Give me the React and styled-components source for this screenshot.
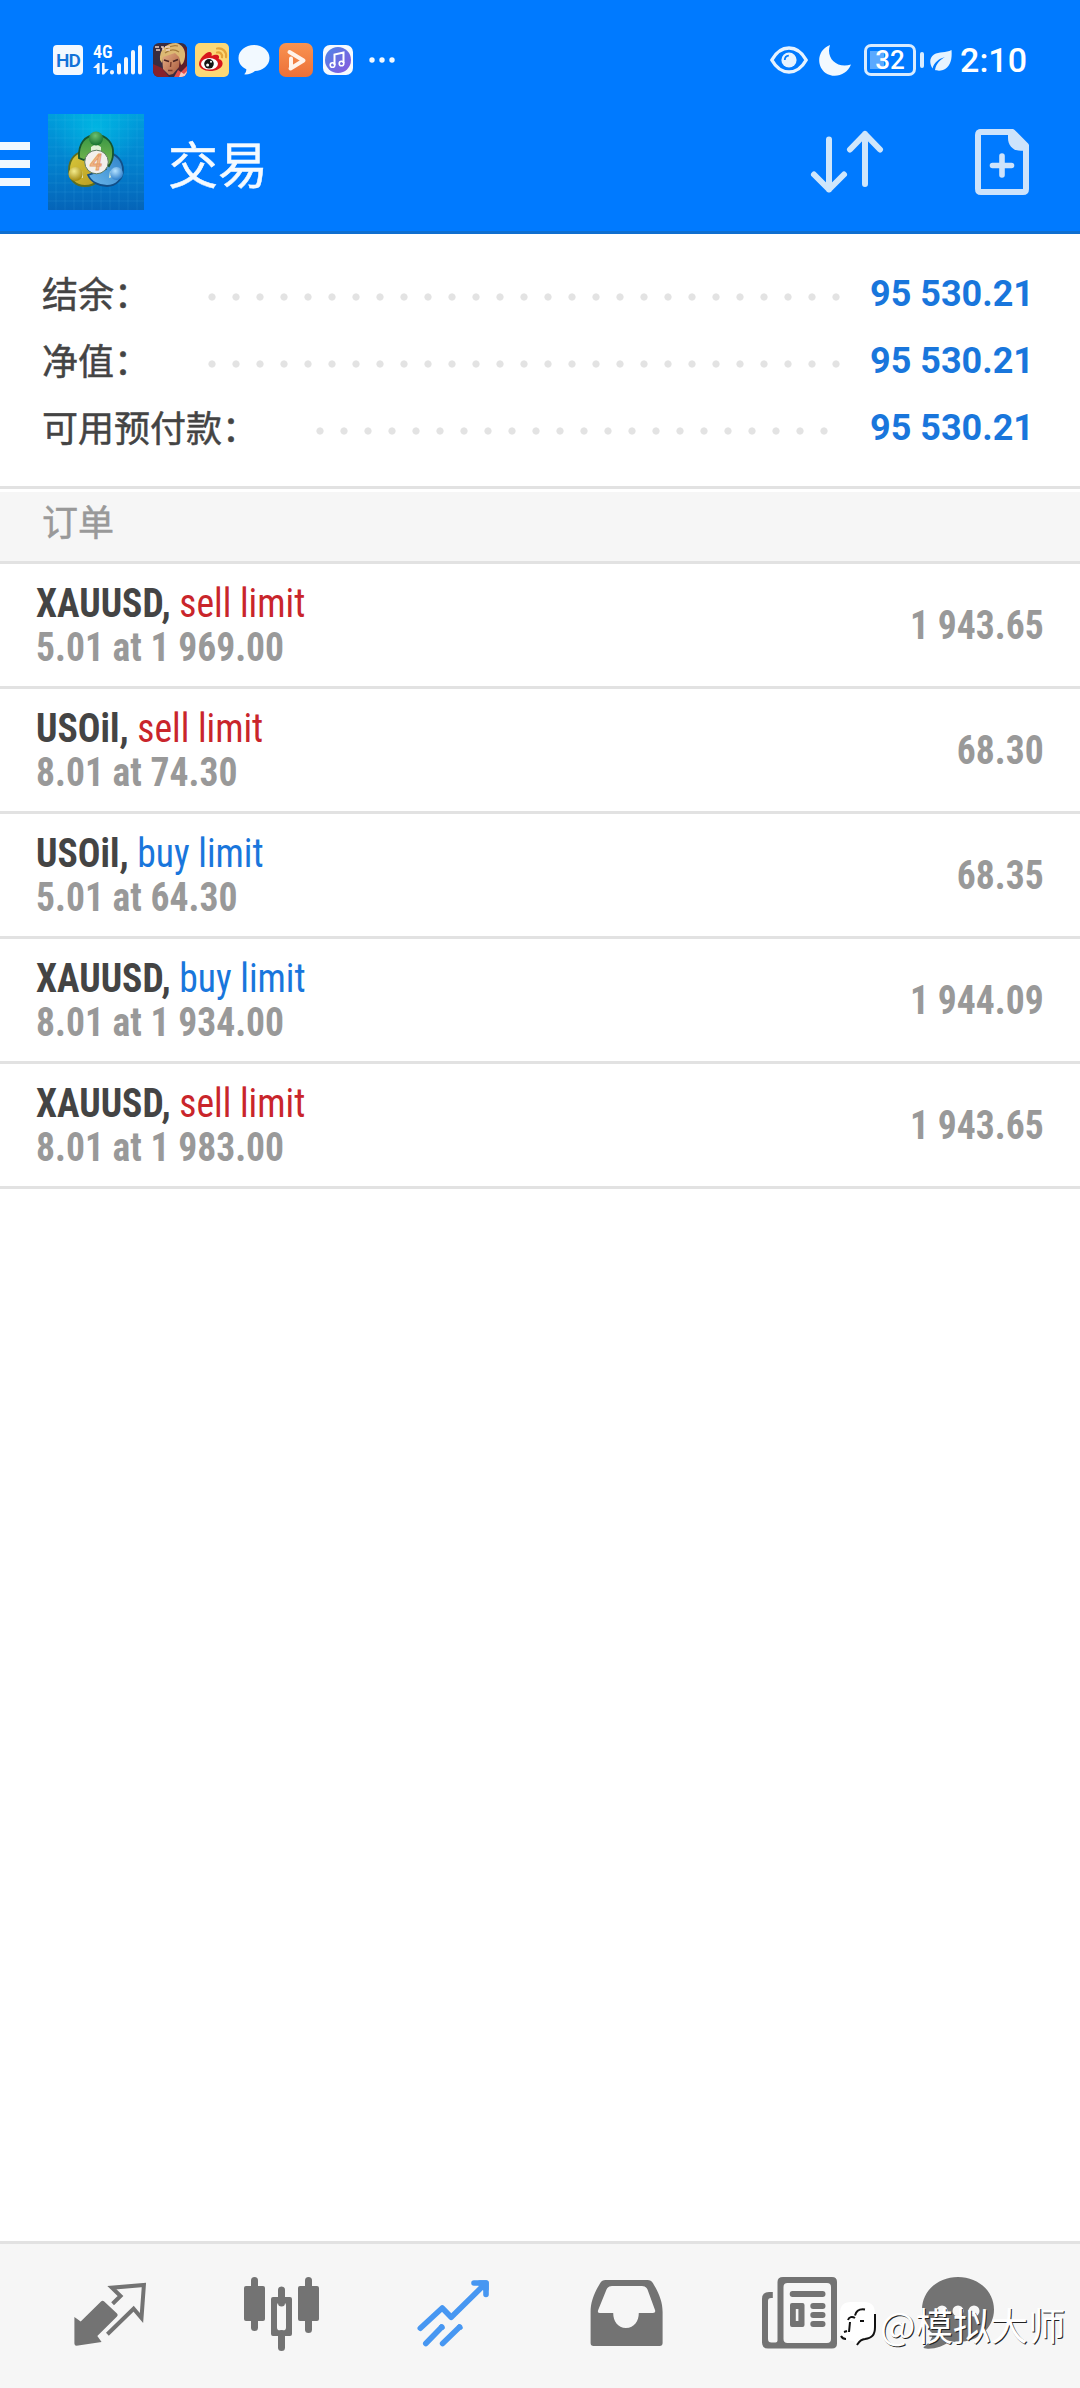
import React from "react"
import styled, { createGlobalStyle } from "styled-components"

const GlobalStyle = createGlobalStyle`
	:root {
		--blue: #007aff;
		--value: #1976dc;
		--sell: #c9252b;
		--dark: #444;
		--grey: #999;
		--line: #e2e2e2;
		--panel: #f6f6f6;
		--nav: #737373;
	}
	* {
		box-sizing: border-box;
	}
	body {
		margin: 0;
		background: #fff;
		font-family: Roboto, "Noto Sans CJK SC", sans-serif;
	}
	svg {
		display: block;
		flex: none;
	}
`
const Screen = styled.div`
	width: 1080px;
	height: 2388px;
	display: flex;
	flex-direction: column;
	overflow: hidden;
	background: #fff;
`
const Header = styled.header`
	height: 234px;
	background: var(--blue);
	border-bottom: 3px solid #0f6fd0;
`
const StatusBar = styled.div`
	height: 98px;
	padding: 22px 53px 0 53px;
	display: flex;
	align-items: center;
	justify-content: space-between;
`
const StatusGroup = styled.div`
	display: flex;
	align-items: center;
`
const HdBadge = styled.div`
	width: 30px;
	height: 30px;
	margin-right: 10px;
	border-radius: 4px;
	background: #f2f8ff;
	color: #1372d8;
	font-size: 19px;
	font-weight: 600;
	line-height: 31px;
	text-align: center;
	letter-spacing: -1px;
`
const Signal = styled.div`
	position: relative;
	width: 51px;
	height: 32px;
`
const SignalLabel = styled.span`
	position: absolute;
	left: 0;
	top: -1px;
	color: #fff;
	font-family: "Roboto Condensed", Roboto, sans-serif;
	font-size: 18px;
	font-weight: 600;
	line-height: 18px;
`
const StatusIcon = styled.div`
	margin-left: ${p => p.$gap}px;
`
const Battery = styled.div`
	position: relative;
	width: 52px;
	height: 32px;
	margin-left: 13px;
	border: 3px solid #d9ecff;
	border-radius: 7px;
	background: linear-gradient(90deg, #5aa9ff 14px, transparent 14px) 3px 4px / 40px 18px no-repeat;
	color: #fff;
	font-size: 26px;
	font-weight: 500;
	line-height: 26px;
	text-align: center;
`
const BatteryTip = styled.div`
	width: 4px;
	height: 16px;
	margin-left: 4px;
	border-radius: 2px;
	background: #d9ecff;
`
const Clock = styled.div`
	margin-left: 8px;
	color: #fff;
	font-size: 34px;
	font-weight: 500;
	line-height: 40px;
`
const Toolbar = styled.div`
	height: 128px;
	padding-right: 50px;
	display: flex;
	align-items: center;
`
const MenuButton = styled.div`
	width: 30px;
	margin: 4px 18px 0 0;
	display: flex;
	flex-direction: column;
	gap: 10px;

	span {
		height: 8px;
		background: #f0f8ff;
	}
`
const Title = styled.h1`
	flex: 1;
	margin: 0 0 0 24px;
	color: #f4faff;
	font-family: "Noto Sans CJK SC", sans-serif;
	font-size: 50px;
	font-weight: 400;
	line-height: 60px;
	-webkit-text-stroke: 0.5px;
`
const ToolbarActions = styled.div`
	display: flex;
	align-items: center;
	gap: 90px;
`
const Summary = styled.section`
	height: 255px;
	padding: 26px 46px 0 42px;
	border-bottom: 3px solid var(--line);
`
const SummaryRow = styled.div`
	height: 67px;
	display: flex;
	align-items: center;
`
const SummaryLabel = styled.div`
	width: ${p => (p.$wide ? 266 : 158)}px;
	padding-bottom: 4px;
	color: var(--dark);
	font-family: "Noto Sans CJK SC", sans-serif;
	font-size: 36px;
	line-height: 44px;
	white-space: nowrap;
	-webkit-text-stroke: 0.5px;
`
const Leader = styled.div`
	width: ${p => p.$dots * 24}px;
	height: 8px;
	margin-top: 7px;
	background: radial-gradient(circle, #e3e3e3 3.2px, transparent 4px) 0 0 / 24px 8px repeat-x;
`
const SummaryValue = styled.div`
	margin-left: auto;
	color: var(--value);
	font-size: 36px;
	font-weight: 700;
`
const SectionTitle = styled.h2`
	height: 75px;
	margin: 0;
	padding: 4px 42px 0;
	border-top: 3px solid #fff;
	border-bottom: 3px solid var(--line);
	background: var(--panel);
	color: var(--grey);
	font-family: "Noto Sans CJK SC", sans-serif;
	font-size: 36px;
	font-weight: 400;
	line-height: 48px;
	-webkit-text-stroke: 0.5px;
`
const OrderList = styled.main`
	flex: 1;
	font-family: "Roboto Condensed", Roboto, sans-serif;
	font-size: 41px;
	line-height: 44px;
`
const OrderRow = styled.div`
	height: 125px;
	padding: 0 36px;
	display: flex;
	align-items: center;
	justify-content: space-between;
	border-bottom: 3px solid var(--line);
`
const OrderInfo = styled.div`
	transform: scaleX(0.917);
	transform-origin: left;
	white-space: nowrap;
`
const OrderHeading = styled.div`
	color: var(--dark);
	font-weight: 700;
`
const OrderSide = styled.span`
	color: ${p => (p.$side === "sell" ? "var(--sell)" : "var(--value)")};
	font-weight: 400;
`
const OrderVolume = styled.div`
	color: var(--grey);
	font-weight: 700;
`
const OrderPrice = styled.div`
	color: var(--grey);
	font-weight: 700;
	transform: scaleX(0.917);
	transform-origin: right;
`
const NavBar = styled.nav`
	position: relative;
	height: 147px;
	padding: 0 24px;
	display: flex;
	border-top: 3px solid var(--line);
	background: var(--panel);
`
const NavItem = styled.div`
	width: 172px;
	display: flex;
	align-items: center;
	justify-content: center;
	color: ${p => (p.$active ? "#4797f2" : "var(--nav)")};

	svg {
		overflow: visible;
	}
`
const Watermark = styled.div`
	position: absolute;
	left: 838px;
	top: 55px;
	display: flex;
	align-items: center;
	color: #fff;
	font-family: "Noto Sans CJK SC", sans-serif;
	font-size: 37.5px;
	line-height: 50px;
	white-space: nowrap;
	text-shadow: 1px 1px 0 #222;
`

const SignalBars = () => (
  <svg width="51" height="32" viewBox="0 0 51 32">
    <g stroke="#f2f8ff" strokeWidth="4" strokeLinecap="round">
      <path d="M19 28v0.5M26 21v7.5M33 15v13.5M40 8v20.5M47 3v25.5" />
    </g>
    <path d="M0 24l5-5h1.6v11H3.8v-6zM9 19h2.6v6H16l-5 5.5H9z" fill="#f2f8ff" />
  </svg>
)

const GameIcon = () => (
  <svg width="34" height="34" viewBox="0 0 34 34">
    <defs>
      <clipPath id="game"><rect width="34" height="34" rx="6" /></clipPath>
      <linearGradient id="face" x1="0" y1="0" x2="1" y2="1">
        <stop offset="0" stopColor="#e9b58a" />
        <stop offset="1" stopColor="#a8583c" />
      </linearGradient>
    </defs>
    <g clipPath="url(#game)">
      <rect width="34" height="34" fill="#3a2c40" />
      <path d="M24 4h10v22l-9 2z" fill="#5c1f2a" />
      <path d="M0 21l9 4 7 9H0z" fill="#86222a" />
      <path d="M9 13l10-6 8 6-1 11-6 7-4 1-6-6z" fill="url(#face)" />
      <path d="M7 17C6 7 13 0 23 0c6 1 10 7 9 14-.5 4-2 7-4 8l-2-8-4-4-6 2-6 2-1 6z" fill="#dcb873" />
      <path d="M13 6c4-3 8-4 12-3M12 10c5-4 10-4 14-1" stroke="#a47a3c" strokeWidth="1.2" fill="none" />
      <path d="M11 17l5 1.500M20 18.500l5-2" stroke="#4a2320" strokeWidth="1.800" />
      <path d="M18 19l-.5 5M15 27.500h4.500" stroke="#7a3a2a" strokeWidth="1.400" />
      <path d="M2 4h4M3 7h4M8 4h2v3M12 4h5M13 7h4" stroke="#f0d2c4" strokeWidth="1.600" />
      <path d="M21 34l4-7 3 2 6-6v11z" fill="#e0504f" />
      <path d="M26 34l2-5 3 2 3-3v6z" fill="#f7c9c0" />
    </g>
  </svg>
)

const WeiboIcon = () => (
  <svg width="34" height="34" viewBox="0 0 34 34">
    <rect width="34" height="34" rx="5" fill="#fcd877" />
    <path d="M4 21c0-5 6-11 10-12 3 0 3 2 2.600 4 3-1.500 7-2 7.400.6.2 1.400-.4 2.400-.4 2.400 2.400.6 4 2 4 4.400C27.600 25 21 28 15 28S4 25 4 21z" fill="#d8161d" />
    <ellipse cx="14.500" cy="20.800" rx="8.500" ry="5.800" fill="#fff" />
    <circle cx="14" cy="20.800" r="4.800" fill="#151515" />
    <circle cx="12.600" cy="22" r="1.500" fill="#fff" />
    <circle cx="16" cy="18.800" r="1" fill="#fff" />
    <path d="M22 9.500c3-.8 5.600 1.500 5 4.700M22 5.500c5.500-1 10 3 9 8.700" fill="none" stroke="#e5a43a" strokeWidth="2.200" strokeLinecap="round" />
  </svg>
)

const ChatIcon = () => (
  <svg width="32" height="32" viewBox="0 0 32 32">
    <path d="M16 1c8.500 0 15.500 5.600 15.500 13S24.500 27 17 27c-3 2.600-7 3.700-11 3.300 1.600-1.300 2.400-3 2.300-5C3.500 23 .5 19 .5 14 .5 6.600 7.500 1 16 1z" fill="#f2f9ff" />
  </svg>
)

const VideoIcon = () => (
  <svg width="34" height="34" viewBox="0 0 34 34">
    <defs>
      <linearGradient id="video" x1="0" y1="0" x2="0" y2="1">
        <stop offset="0" stopColor="#f99350" />
        <stop offset="1" stopColor="#ec7038" />
      </linearGradient>
    </defs>
    <rect width="34" height="34" rx="7" fill="url(#video)" />
    <path d="M12 24V15.500M10.500 9L24.500 17.500 11.500 25.500" fill="none" stroke="#fff3ea" strokeWidth="4" strokeLinecap="round" strokeLinejoin="round" />
  </svg>
)

const MusicIcon = () => (
  <svg width="30" height="30" viewBox="0 0 30 30">
    <defs>
      <linearGradient id="music" x1="0" y1="0" x2="1" y2="1">
        <stop offset="0" stopColor="#4d86e8" />
        <stop offset="1" stopColor="#8a58dc" />
      </linearGradient>
    </defs>
    <rect width="30" height="30" rx="7" fill="#f6faff" />
    <circle cx="15" cy="15" r="13" fill="url(#music)" />
    <path d="M11.500 20V9.500l9-2V18" fill="none" stroke="#fff" strokeWidth="2" />
    <circle cx="9.500" cy="20" r="2.300" fill="none" stroke="#fff" strokeWidth="1.600" />
    <circle cx="18.500" cy="18.500" r="2.300" fill="none" stroke="#fff" strokeWidth="1.600" />
  </svg>
)

const MoreDots = () => (
  <svg width="26" height="6" viewBox="0 0 26 6" fill="#f2f9ff">
    <circle cx="3" cy="3" r="2.700" />
    <circle cx="13" cy="3" r="2.700" />
    <circle cx="23" cy="3" r="2.700" />
  </svg>
)

const EyeIcon = () => (
  <svg width="38" height="28" viewBox="0 0 38 28">
    <path d="M1.800 14C6 6.500 12 2 19 2s13 4.500 17.200 12C32 21.500 26 26 19 26S6 21.500 1.800 14z" fill="none" stroke="#e6f3ff" strokeWidth="3.400" strokeLinejoin="round" />
    <circle cx="19" cy="14" r="7.600" fill="#e6f3ff" />
    <path d="M14.800 14c0-2.500 1.500-4.200 4-4.400" fill="none" stroke="#007aff" strokeWidth="1.800" />
  </svg>
)

const MoonIcon = () => (
  <svg width="32" height="31" viewBox="0 0 32 31">
    <path d="M11 0C-2 5-3 21 6.500 28c9 6 21.500 2 25.500-8.500C18 24 6.500 13 11 0z" fill="#f2f9ff" />
  </svg>
)

const LeafIcon = () => (
  <svg width="22" height="23" viewBox="0 0 22 23">
    <path d="M21.500 1c.8 9-1 17.500-8.500 20-3.500 1.200-6.500.5-8 0C6 14.500 10.500 10.500 15 8 9.500 9.500 4 13 2.500 19.500-.5 15-1 9 4 5.500 9 2.500 16 4 21.500 1z" fill="#e6f3ff" />
  </svg>
)

const AppLogo = () => (
  <svg width="96" height="96" viewBox="0 0 96 96">
    <defs>
      <linearGradient id="tile" x1="0" y1="0" x2="0" y2="1">
        <stop offset="0" stopColor="#009fdc" />
        <stop offset="0.500" stopColor="#0282cf" />
        <stop offset="1" stopColor="#0564b8" />
      </linearGradient>
      <radialGradient id="glow" cx="0.500" cy="0.150" r="0.450">
        <stop offset="0" stopColor="#00c8e8" stopOpacity="0.600" />
        <stop offset="1" stopColor="#00c8e8" stopOpacity="0" />
      </radialGradient>
      <linearGradient id="green" x1="0" y1="0" x2="0" y2="1">
        <stop offset="0" stopColor="#379544" />
        <stop offset="1" stopColor="#7cba50" />
      </linearGradient>
      <linearGradient id="yellow" x1="0" y1="0" x2="1" y2="1">
        <stop offset="0" stopColor="#d9c93c" />
        <stop offset="1" stopColor="#b89a20" />
      </linearGradient>
      <linearGradient id="sky" x1="0" y1="1" x2="1" y2="0">
        <stop offset="0" stopColor="#6cb8ec" />
        <stop offset="1" stopColor="#2c80c8" />
      </linearGradient>
      <radialGradient id="greenBall" cx="0.450" cy="0.300" r="0.700">
        <stop offset="0" stopColor="#6cc070" />
        <stop offset="1" stopColor="#14702e" />
      </radialGradient>
      <radialGradient id="yellowBall" cx="0.400" cy="0.300" r="0.700">
        <stop offset="0" stopColor="#f4ec8c" />
        <stop offset="1" stopColor="#a48a10" />
      </radialGradient>
      <radialGradient id="blueBall" cx="0.400" cy="0.300" r="0.700">
        <stop offset="0" stopColor="#b4e2ff" />
        <stop offset="1" stopColor="#2f80cc" />
      </radialGradient>
    </defs>
    <rect width="96" height="96" fill="url(#tile)" />
    <rect width="96" height="96" fill="url(#glow)" />
    <path d="M8 0v96M17 0v96M26 0v96M35 0v96M44 0v96M53 0v96M62 0v96M71 0v96M80 0v96M89 0v96M0 6h96M0 15h96M0 24h96M0 33h96M0 42h96M0 51h96M0 60h96M0 69h96M0 78h96M0 87h96" stroke="#7fd8ff" strokeOpacity="0.100" />
    <path d="M38 38c-9-1-17 6-17 18 0 10 7 16 16 16 6 0 10-2 13-5z" fill="url(#yellow)" stroke="#5c6e20" strokeWidth="1.800" />
    <path d="M59 38c10 2 16 9 16 18 0 9-7 16-16 16-8 0-16-4-19-11l18-6z" fill="url(#sky)" stroke="#124f88" strokeWidth="1.800" />
    <path d="M31 44c-1-14 6-23 17-23s18 9 17 19c0 5-2 9-4 12L48 40 36 46z" fill="url(#green)" stroke="#15552f" strokeWidth="1.800" />
    <path d="M43 33l5-3 5 3v6H43zM34 57l1 7-6-2zM62 57l-1 7 6-2z" fill="#dff0d6" />
    <circle cx="48" cy="24.500" r="7" fill="url(#greenBall)" />
    <circle cx="27.500" cy="60" r="7" fill="url(#yellowBall)" />
    <circle cx="68.500" cy="59.500" r="6.500" fill="url(#blueBall)" />
    <circle cx="48.500" cy="48" r="11.800" fill="#f2efec" stroke="#5c7a60" strokeWidth="1" />
    <text x="48" y="56" textAnchor="middle" fontFamily="Roboto, sans-serif" fontSize="22" fontStyle="italic" fontWeight="500" fill="#f3b98a" stroke="#e39a68" strokeWidth="0.800">4</text>
  </svg>
)

const SortIcon = () => (
  <svg width="76" height="68" viewBox="0 0 76 68" fill="none" stroke="#cfe6fb" strokeWidth="6" strokeLinecap="round" strokeLinejoin="round">
    <path d="M21 11.500v50M6 46.500l15 15 15-15" />
    <path d="M57 56V6M42 21.500L57 6l15 15.500" />
  </svg>
)

const NewOrderIcon = () => (
  <svg width="56" height="68" viewBox="0 0 56 68">
    <path d="M6 4h32.500L52 17.500V61q0 3-3 3H7q-3 0-3-3V7q0-3 3-3z" fill="none" stroke="#cde3fb" strokeWidth="6" strokeLinejoin="round" />
    <path d="M34 7h6l12 11v4c-9 3-18-2-18-12z" fill="#cde3fb" />
    <path d="M28 28v19M18.500 37.500h19" stroke="#cde3fb" strokeWidth="5.600" strokeLinecap="round" />
  </svg>
)

const QuotesIcon = () => (
  <svg width="84" height="84" viewBox="0 0 84 84" fill="currentColor">
    <path d="M6.400 43l6.300 4.600L33 27.500q1.600-1.500 3.200 0L49 39.500q1.500 1.500 0 3L29.300 62l4.300 6L8.500 71.700q-2.100 0-2.100-2.200z" />
    <path d="M44.600 29.700l7.900-7.700-8.600-8.300 32-2.700-2.400 33-7.900-9.300-26.200 25.600" fill="none" stroke="currentColor" strokeWidth="4" />
  </svg>
)

const ChartsIcon = () => (
  <svg width="84" height="84" viewBox="0 0 84 84" fill="currentColor">
    <rect x="11" y="3" width="7" height="54" rx="3.500" />
    <rect x="4" y="12" width="21" height="35" rx="2" />
    <rect x="65" y="3" width="7" height="56" rx="3.500" />
    <rect x="58" y="12" width="21" height="35" rx="2" />
    <rect x="38" y="12.500" width="7" height="20" rx="3.500" />
    <rect x="38" y="56" width="7" height="21" rx="3.500" />
    <path fillRule="evenodd" d="M33 23h17q2 0 2 2v35q0 2-2 2H33q-2 0-2-2V25q0-2 2-2zM40 28.500q-3 0-3 3v22q0 3 3 3h3q3 0 3-3v-22q0-3-3-3z" />
  </svg>
)

const TradeIcon = () => (
  <svg width="84" height="84" viewBox="0 0 84 84" fill="none" stroke="currentColor" strokeWidth="5.600" strokeLinecap="round" strokeLinejoin="round">
    <path d="M8.300 54.200L30.200 34l9 9.300L73.500 9.500M62 9h12v11.500" />
    <path d="M68 9l6 6V9z" fill="currentColor" />
    <path d="M13.800 69.500l16-16.500M30.600 69.500l17-16.500" />
    <path d="M29 54l2-2M47 54l2-2" strokeLinecap="butt" strokeWidth="6" />
  </svg>
)

const HistoryIcon = () => (
  <svg width="84" height="84" viewBox="0 0 84 84" fill="currentColor">
    <path fillRule="evenodd" d="M21.500 6h42q3.500 0 5.500 3.200C75 19 78.600 28 78.600 38v31q0 3-3 3h-66q-3 0-3-3V38c0-10 3.500-19 9.500-28.800Q18 6 21.500 6zM28 12q-4 0-5.500 3.500L14.200 36q-1.200 3 1.800 3h13.200c0 8 4.500 15 12.800 15s12.800-7 12.800-15H69q3 0 2-3L63.500 15.500Q62 12 58 12z" />
  </svg>
)

const NewsIcon = () => (
  <svg width="84" height="84" viewBox="0 0 84 84" fill="currentColor">
    <path fillRule="evenodd" d="M27 3h49q5 0 5 5v61.500q0 5-5 5H12q-6 0-6-6V25q0-7 7-7h3.800v6H15q-3 0-3 3v38q0 3.500 3.500 3.500h4q2 0 2-2V8q0-5 5.500-5zM31.500 9q-4 0-4 4v52q0 4 4 4H71q4 0 4-4V13q0-4-4-4z" />
    <path d="M36.600 20h30M57.200 32h9.400M57.200 41h9.400M57.200 50h9.400" stroke="currentColor" strokeWidth="5.800" strokeLinecap="round" />
    <path fillRule="evenodd" d="M36 29h10.500q2 0 2 2v20q0 2-2 2H36q-2 0-2-2V31q0-2 2-2zM39.800 35v12h2.600V35z" />
  </svg>
)

const MailboxIcon = () => (
  <svg width="84" height="84" viewBox="0 0 84 84">
    <g transform="translate(-12 0)">
      <path d="M42 3c20 0 36 14 36 32.500S62 68 42 68c-3 0-6-.3-8-1-6 5-14 7.800-22 7.700q-7-.2-3-2.700c4-3 7-7 8-12C10 54 6 45 6 35.500 6 17 22 3 42 3z" fill="currentColor" />
      <g fill="#f6f6f6">
        <circle cx="26" cy="37" r="5.500" />
        <circle cx="42" cy="37" r="5.500" />
        <circle cx="58" cy="37" r="5.500" />
      </g>
    </g>
  </svg>
)

const WatermarkLogo = () => (
  <svg width="42" height="48" viewBox="0 0 42 48">
    <path d="M13 2h13c8 0 11 4 11 12v13c0 8-3 11-11 12l-8 6-2-4C6 41 2 36 2 27V14C2 6 5 2 13 2z" fill="#fff" />
    <path d="M37 14v13c0 8-3 11-10 12-5 .500-6 3-8 6" fill="none" stroke="#111" strokeWidth="2" />
    <path d="M27 9.500c-7-1-9 2-10 6M10 20c1-3 4-4 7-2M12 22l-1 10M9 31l-3 1M22 21h4M3 36c1 2 3 3 5 3" fill="none" stroke="#111" strokeWidth="2" />
  </svg>
)

const summary = [
  { label: "结余：", value: "95 530.21", dots: 27 },
  { label: "净值：", value: "95 530.21", dots: 27 },
  { label: "可用预付款：", value: "95 530.21", dots: 22, wide: true }
]

const orders = [
  { symbol: "XAUUSD", side: "sell", volume: "5.01 at 1 969.00", price: "1 943.65" },
  { symbol: "USOil", side: "sell", volume: "8.01 at 74.30", price: "68.30" },
  { symbol: "USOil", side: "buy", volume: "5.01 at 64.30", price: "68.35" },
  { symbol: "XAUUSD", side: "buy", volume: "8.01 at 1 934.00", price: "1 944.09" },
  { symbol: "XAUUSD", side: "sell", volume: "8.01 at 1 983.00", price: "1 943.65" }
]

const navItems = [
  { id: "quotes", Icon: QuotesIcon },
  { id: "charts", Icon: ChartsIcon },
  { id: "trade", Icon: TradeIcon, active: true },
  { id: "history", Icon: HistoryIcon },
  { id: "news", Icon: NewsIcon },
  { id: "mailbox", Icon: MailboxIcon }
]

function PhoneStatus() {
  return (
    <StatusBar>
      <StatusGroup>
        <HdBadge>HD</HdBadge>
        <Signal>
          <SignalLabel>4G</SignalLabel>
          <SignalBars/>
        </Signal>
        <StatusIcon $gap={9}><GameIcon/></StatusIcon>
        <StatusIcon $gap={8}><WeiboIcon/></StatusIcon>
        <StatusIcon $gap={9}><ChatIcon/></StatusIcon>
        <StatusIcon $gap={9}><VideoIcon/></StatusIcon>
        <StatusIcon $gap={10}><MusicIcon/></StatusIcon>
        <StatusIcon $gap={16}><MoreDots/></StatusIcon>
      </StatusGroup>
      <StatusGroup>
        <EyeIcon/>
        <StatusIcon $gap={11}><MoonIcon/></StatusIcon>
        <Battery>32</Battery>
        <BatteryTip/>
        <StatusIcon $gap={6}><LeafIcon/></StatusIcon>
        <Clock>2:10</Clock>
      </StatusGroup>
    </StatusBar>
  )
}

function Order({ symbol, side, volume, price }) {
  return (
    <OrderRow>
      <OrderInfo>
        <OrderHeading>
          {symbol}, <OrderSide $side={side}>{side} limit</OrderSide>
        </OrderHeading>
        <OrderVolume>{volume}</OrderVolume>
      </OrderInfo>
      <OrderPrice>{price}</OrderPrice>
    </OrderRow>
  )
}

export default function App() {
  return (
    <Screen>
      <GlobalStyle/>
      <Header>
        <PhoneStatus/>
        <Toolbar>
          <MenuButton><span/><span/><span/></MenuButton>
          <AppLogo/>
          <Title>交易</Title>
          <ToolbarActions>
            <SortIcon/>
            <NewOrderIcon/>
          </ToolbarActions>
        </Toolbar>
      </Header>
      <Summary>
        {summary.map(({ label, value, dots, wide }) => (
          <SummaryRow key={label}>
            <SummaryLabel $wide={wide}>{label}</SummaryLabel>
            <Leader $dots={dots}/>
            <SummaryValue>{value}</SummaryValue>
          </SummaryRow>
        ))}
      </Summary>
      <SectionTitle>订单</SectionTitle>
      <OrderList>
        {orders.map((order, i) => <Order key={i} {...order}/>)}
      </OrderList>
      <NavBar>
        {navItems.map(({ id, Icon, active }) => (
          <NavItem key={id} $active={active}><Icon/></NavItem>
        ))}
        <Watermark>
          <WatermarkLogo/>
          @模拟大师
        </Watermark>
      </NavBar>
    </Screen>
  )
}
